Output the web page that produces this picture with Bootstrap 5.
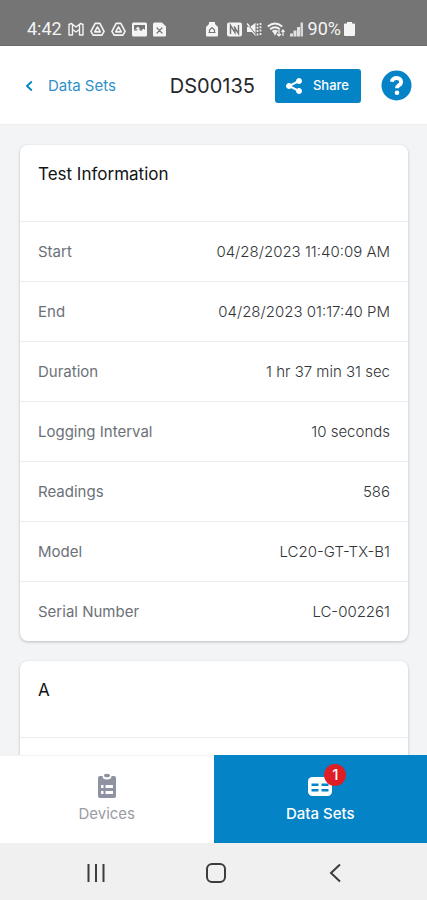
<!DOCTYPE html>
<html lang="en">
<head>
<meta charset="utf-8">
<meta name="viewport" content="width=device-width, initial-scale=1">
<title>DS00135</title>
<link rel="stylesheet" href="https://cdn.jsdelivr.net/npm/bootstrap@5.3.0/dist/css/bootstrap.min.css">
<style>
  :root { --brand: #0583c7; --line: #ececee; }
  body { font-family: Inter, "Liberation Sans", sans-serif; font-size: 15px; line-height: 20px; background: #f2f4f6; color: #4b4d50; }
  svg { display: block; flex: none; }
  .status-bar { background: #757575; color: #f4f4f4; padding: 12px 72px 0 27px; height: 46px; font: 18px/34px Roboto, sans-serif; border-bottom: 1px solid #6a6a6a; }
  .status-bar > div { height: 34px; }
  .status-left { gap: 6px; }
  .status-right { gap: 5px; }
  .top-bar { height: 79px; padding: 1px 15px 0 24px; border-bottom: 1px solid #eceef0; }
  .back-link { color: #2f8fca; gap: 14px; }
  .page-title { font-size: 20px; line-height: 24px; font-weight: 400; color: #26282b; margin-right: 20px; }
  .btn-brand { --bs-btn-bg: var(--brand); --bs-btn-color: #fff; --bs-btn-hover-bg: #0474b1; --bs-btn-hover-color: #fff; --bs-btn-active-bg: #0474b1; --bs-btn-active-color: #fff; --bs-btn-border-radius: 3px; --bs-btn-font-size: 13px; --bs-btn-font-weight: 500; height: 34px; padding: 0 12px 0 10px; gap: 10px; margin-right: 20px; }
  .help-btn { width: 31px; height: 31px; }
  .scroll-area { padding: 20px 19px 0 20px; min-height: 0; }
  .info-card { --bs-card-border-width: 0; --bs-card-border-radius: 8px; margin-bottom: 20px; box-shadow: 0 1px 3px rgba(40, 50, 60, .28); }
  .info-title { font-size: 17px; line-height: 20px; font-weight: 400; color: #111315; padding: 19px 18px 37px; }
  .info-row { min-height: 60px; padding: 1px 18px 0; border-top: 1px solid var(--line); gap: 12px; }
  .info-row dt { font-weight: 400; color: #6c7178; }
  .info-row dd { font-weight: 300; color: #333538; }
  .tab-bar { height: 88px; }
  .tab-item { width: 50%; color: #9a9ca4; gap: 5px; padding-bottom: 2px; border-top: 1px solid #f1f2f3; }
  .tab-item.active { background: var(--brand); color: #fff; border-color: var(--brand); font-weight: 500; }
  .count-badge { top: -9px; left: 17px; width: 22px; height: 22px; background: #df1d25; font-size: 15px; line-height: 22px; font-weight: 500; }
  .system-nav { height: 57px; background: #f0f0f0; padding: 2px 32px 0 36px; }
  .system-nav button { width: 120px; color: #3c3c3c; }
</style>
<script defer src="https://cdn.jsdelivr.net/npm/bootstrap@5.3.0/dist/js/bootstrap.bundle.min.js"></script>
</head>
<body class="d-flex flex-column vh-100 overflow-hidden">

<div class="status-bar d-flex justify-content-between flex-shrink-0">
  <div class="status-left d-flex align-items-center">
    <span>4:42</span>
    <svg width="16" height="15" viewBox="0 0 16 15" fill="none" stroke="currentColor" stroke-width="1.400" stroke-linejoin="round"><path d="M1 2.500 3.500 1.500 8 5l4.500-3.500L15 2.500V13h-3.500V7.500L8 10 4.500 7.500V13H1zM4.500 2.500v5M11.500 2.500v5"/></svg>
    <svg width="15" height="15" viewBox="0 0 16 15" fill="none" stroke="currentColor" stroke-width="1.700" stroke-linejoin="round"><path d="M5.500 1h5L15 9.500 12.700 13.500H3.300L1 9.500z"/><path d="M8 4.800 11 10H5z"/></svg>
    <svg width="15" height="15" viewBox="0 0 16 15" fill="none" stroke="currentColor" stroke-width="1.700" stroke-linejoin="round"><path d="M5.500 1h5L15 9.500 12.700 13.500H3.300L1 9.500z"/><path d="M8 4.800 11 10H5z"/></svg>
    <svg width="15" height="15" viewBox="0 0 15 15"><rect y=".5" width="15" height="14" rx="1.500" fill="currentColor"/><path d="M2 8V3h11v5l-1.500-1.500L9 9 6.500 6.500 4 9z" fill="#757575"/><path d="M3 7.500 6 4.500l2 2.500z" fill="currentColor"/></svg>
    <svg width="13" height="15" viewBox="0 0 13 15"><path d="M1.500.5h7.500L13 4.500v9a1 1 0 0 1-1 1H1a1 1 0 0 1-1-1V2A1.500 1.500 0 0 1 1.500.5z" fill="currentColor"/><path d="m4 6 5 5M9 6l-5 5M3.500 6H5M8 6h1.500M3.500 11H5M8 11h1.500" stroke="#757575" stroke-width="1.200"/></svg>
  </div>
  <div class="status-right d-flex align-items-center">
    <svg width="12" height="15" viewBox="0 0 12 15"><path d="M3 0h6v2l3 3v8.500a1 1 0 0 1-1 1H1a1 1 0 0 1-1-1V5l3-3z" fill="currentColor"/><path d="M3.500 10.500V8L6 5.500 8.500 8v2.500zM2.500 10.500h7" fill="none" stroke="#757575" stroke-width="1.200"/></svg>
    <svg class="ms-1" width="15" height="15" viewBox="0 0 15 15"><rect y=".5" width="15" height="14" rx="2" fill="currentColor"/><path d="M3.500 12V3.500L8 10.500V5M11.500 3v8.500L7 4.500" fill="none" stroke="#757575" stroke-width="1.400"/></svg>
    <svg width="15" height="15" viewBox="0 0 15 15"><path d="M0 5h3L8.500.8v13.400L5 10H0z" fill="currentColor"/><path d="M.5 2 9 12.500" stroke="#757575"/><path d="m0 1.500 2.500 3" stroke="currentColor" stroke-width="1.500"/><path d="M10.500 1.500v12M13.500 1v13" fill="none" stroke="currentColor" stroke-width="1.700" stroke-dasharray="2 1.300"/></svg>
    <svg width="18" height="15" viewBox="0 0 18 15" fill="none" stroke="currentColor" stroke-width="1.900"><path d="M.8 4.500Q8 -1.500 15.200 4.500M3.200 7.300Q8 3.200 12.800 7.300M5.500 9.800Q8 7.700 10.500 9.800"/><path d="M7 10.500h2l-1 2zM12 8v6m-2-2 2 2 2-2M16 14V8m-1.500 1.800L16 8l1.500 1.800" stroke-width="1.200"/></svg>
    <svg width="13" height="15" viewBox="0 0 13 15" fill="currentColor"><path d="M0 11.500h3v3H0zM3.500 8.500h3v6h-3zM7 5h3v9.500H7z" opacity=".85"/><path d="M10.500.5H13v14h-2.500z" opacity=".8"/></svg>
    <span class="d-flex align-items-center">90%<svg width="14" height="14" viewBox="-3 0 14 14"><path d="M3 0h5v1.500h2a1 1 0 0 1 1 1V13a1 1 0 0 1-1 1H1a1 1 0 0 1-1-1V2.500a1 1 0 0 1 1-1h2z" fill="currentColor"/></svg></span>
  </div>
</div>

<header class="top-bar bg-white d-flex align-items-center flex-shrink-0">
  <a href="#" class="back-link d-flex align-items-center text-decoration-none">
    <svg width="10" height="10" viewBox="0 0 10 10" fill="none" stroke="#0583c7" stroke-width="1.800" stroke-linecap="round" stroke-linejoin="round"><path d="M7.300 1 3 5l4.300 4"/></svg>
    Data Sets
  </a>
  <h1 class="page-title mb-0 ms-auto">DS00135</h1>
  <button type="button" class="btn btn-brand border-0 d-flex align-items-center">
    <svg width="18" height="18" viewBox="0 0 18 18" fill="#fff" stroke="#fff"><path d="M14 4 4 9l10 5" fill="none" stroke-width="2"/><circle cx="14" cy="4" r="2.500"/><circle cx="4" cy="9" r="2.500"/><circle cx="14" cy="14" r="2.500"/></svg>
    Share
  </button>
  <button type="button" class="help-btn btn p-0 border-0 rounded-circle" aria-label="Help">
    <svg width="31" height="31" viewBox="0 0 31 31"><circle cx="15.500" cy="15.500" r="15" fill="#0583c7"/><path d="M10.800 11.800c.6-5.200 9.400-5 9.400.2 0 3.300-4.200 3-4.200 6.200" fill="none" stroke="#fff" stroke-width="3.800"/><circle cx="16" cy="22.800" r="2.300" fill="#fff"/></svg>
  </button>
</header>

<main class="scroll-area flex-grow-1 overflow-hidden">
  <section class="info-card card">
    <h2 class="info-title mb-0">Test Information</h2>
    <dl class="mb-0">
      <div class="info-row d-flex align-items-center justify-content-between"><dt>Start</dt><dd class="mb-0">04/28/2023 11:40:09 AM</dd></div>
      <div class="info-row d-flex align-items-center justify-content-between"><dt>End</dt><dd class="mb-0">04/28/2023 01:17:40 PM</dd></div>
      <div class="info-row d-flex align-items-center justify-content-between"><dt>Duration</dt><dd class="mb-0">1 hr 37 min 31 sec</dd></div>
      <div class="info-row d-flex align-items-center justify-content-between"><dt>Logging Interval</dt><dd class="mb-0">10 seconds</dd></div>
      <div class="info-row d-flex align-items-center justify-content-between"><dt>Readings</dt><dd class="mb-0">586</dd></div>
      <div class="info-row d-flex align-items-center justify-content-between"><dt>Model</dt><dd class="mb-0">LC20-GT-TX-B1</dd></div>
      <div class="info-row d-flex align-items-center justify-content-between"><dt>Serial Number</dt><dd class="mb-0">LC-002261</dd></div>
    </dl>
  </section>
  <section class="info-card card">
    <h2 class="info-title mb-0">A</h2>
    <div class="info-row"></div>
  </section>
</main>

<nav class="tab-bar bg-white d-flex flex-shrink-0" aria-label="Sections">
  <a href="#" class="tab-item d-flex flex-column align-items-center justify-content-center text-decoration-none">
    <svg width="20" height="26" viewBox="0 0 20 26"><path d="M3 3h2.500a4.500 3.500 0 0 0 9 0H17a2 2 0 0 1 2 2v18a2 2 0 0 1-2 2H3a2 2 0 0 1-2-2V5a2 2 0 0 1 2-2z" fill="#8f92a0"/><ellipse cx="10" cy="2.500" rx="3" ry="1.800" fill="#8f92a0"/><path d="M4 12h2.500v3H4zM8.500 12H16v3H8.500zM4 18h2.500v3H4zM8.500 18H16v3H8.500z" fill="#fff"/></svg>
    Devices
  </a>
  <a href="#" class="tab-item active d-flex flex-column align-items-center justify-content-center text-decoration-none" aria-current="page">
    <span class="position-relative">
      <svg width="26" height="26" viewBox="0 0 26 26"><rect x="1" y="4" width="24" height="19" rx="4.500" fill="#fff"/><path d="M4.500 10.500h7v2.500h-7zM14.500 10.500h7v2.500h-7zM4.500 16h7v2.500h-7zM14.500 16h7v2.500h-7z" fill="#0583c7"/></svg>
      <span class="count-badge position-absolute rounded-circle text-center">1</span>
    </span>
    Data Sets
  </a>
</nav>

<div class="system-nav d-flex justify-content-between flex-shrink-0">
  <button type="button" class="btn p-0 border-0 d-flex align-items-center justify-content-center" aria-label="Recent apps"><svg width="20" height="20" viewBox="0 0 20 20" stroke="currentColor" stroke-width="2"><path d="M2.500 1v18M10 1v18M17.500 1v18"/></svg></button>
  <button type="button" class="btn p-0 border-0 d-flex align-items-center justify-content-center" aria-label="Home"><svg width="20" height="20" viewBox="0 0 20 20" fill="none" stroke="currentColor" stroke-width="2"><rect x="1" y="1" width="18" height="18" rx="5"/></svg></button>
  <button type="button" class="btn p-0 border-0 d-flex align-items-center justify-content-center" aria-label="Back"><svg width="12" height="20" viewBox="0 0 12 20" fill="none" stroke="currentColor" stroke-width="2"><path d="M11 1.500 2 10l9 8.500"/></svg></button>
</div>

</body>
</html>
